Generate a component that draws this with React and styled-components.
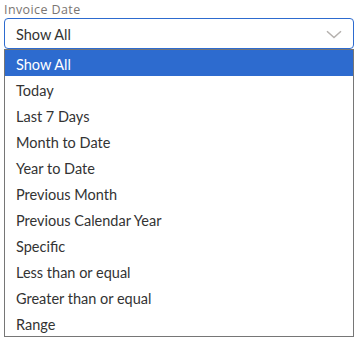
import React from "react";
import styled, { createGlobalStyle } from "styled-components";

const Global = createGlobalStyle`
  html, body { margin: 0; padding: 0; background: #fff; }
  body { font-family: "Lato", "Open Sans", "Liberation Sans", sans-serif; }
`;

const Wrap = styled.div`
  padding: 2px 4px 0 4px;
  width: 350px;
`;

const Label = styled.div`
  font-family: "Open Sans", "Liberation Sans", sans-serif;
  font-size: 12.5px;
  line-height: 15px;
  height: 16px;
  color: #7a7572;
  letter-spacing: 0.4px;
`;

const SelectBox = styled.div`
  box-sizing: border-box;
  height: 31px;
  border: 1px solid #2d6bcf;
  border-radius: 4px;
  display: flex;
  align-items: center;
  justify-content: space-between;
  padding: 1px 11px 0 11px;
  font-size: 14.5px;
  color: #333;
`;

const List = styled.ul`
  list-style: none;
  margin: 0;
  padding: 0;
  box-sizing: border-box;
  border: 1px solid #767676;
`;

const Item = styled.li`
  height: 26px;
  display: flex;
  align-items: center;
  padding-left: 11px;
  padding-top: 2px;
  box-sizing: border-box;
  font-size: 14.5px;
  color: ${(p) => (p.$active ? "#fff" : "#333")};
  background: ${(p) => (p.$active ? "#2d6bcf" : "#fff")};
`;

const options = [
  "Show All",
  "Today",
  "Last 7 Days",
  "Month to Date",
  "Year to Date",
  "Previous Month",
  "Previous Calendar Year",
  "Specific",
  "Less than or equal",
  "Greater than or equal",
  "Range",
];

export default function App() {
  return (
    <>
      <Global />
      <Wrap>
        <Label>Invoice Date</Label>
        <SelectBox>
          <span>Show All</span>
          <svg width="16" height="9" viewBox="0 0 16 9" fill="none">
            <path d="M1 1.2 L8 7.5 L15 1.2" stroke="#b5b1ae" strokeWidth="1.5" />
          </svg>
        </SelectBox>
        <List>
          {options.map((o, i) => (
            <Item key={o} $active={i === 0}>
              {o}
            </Item>
          ))}
        </List>
      </Wrap>
    </>
  );
}
